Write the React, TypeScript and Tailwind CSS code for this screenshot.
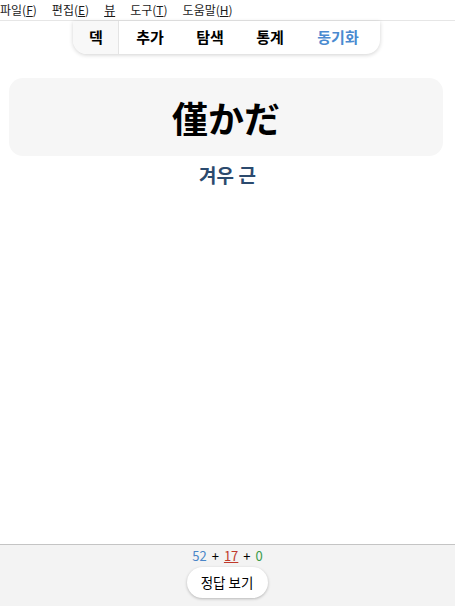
import React from "react";

const kr = { fontFamily: '"Noto Sans CJK KR", "Noto Sans", sans-serif' };
const jp = { fontFamily: '"Noto Sans CJK JP", "Noto Sans CJK KR", sans-serif' };

function MenuItem({ label, mn }: { label: string; mn?: string }) {
  return (
    <span className="leading-none">
      {mn ? (
        <>
          {label}(<span className="underline">{mn}</span>)
        </>
      ) : (
        <span className="underline">{label}</span>
      )}
    </span>
  );
}

export default function App() {
  const tabs = ["추가", "탐색", "통계"];
  return (
    <div className="w-[455px] h-[606px] flex flex-col bg-white text-black overflow-hidden" style={kr}>
      <div className="h-[21px] flex items-center gap-[15px] text-[12px] text-[#1a1a1a] border-b border-[#e6e6e6]">
        <MenuItem label="파일" mn="F" />
        <MenuItem label="편집" mn="E" />
        <MenuItem label="뷰" />
        <MenuItem label="도구" mn="T" />
        <MenuItem label="도움말" mn="H" />
      </div>

      <div className="flex justify-center">
        <div className="ml-[-3px] flex h-[33px] items-stretch rounded-b-[14px] bg-white shadow-[0_1px_4px_rgba(0,0,0,0.18)] overflow-hidden text-[15px] font-bold">
          <div className="w-[46px] pl-[2px] flex items-center justify-center bg-[#f8f8f8] border-r border-[#e4e4e4]">덱</div>
          {tabs.map(t => (
            <div key={t} className="w-[60px] pl-[3px] flex items-center justify-center">{t}</div>
          ))}
          <div className="w-[81px] pr-[2px] flex items-center justify-center text-[#4a8ad0]">동기화</div>
        </div>
      </div>

      <div className="flex-1 flex flex-col pl-[9px] pr-[12px] pt-[24px]">
        <div className="h-[78px] rounded-[14px] bg-[#f6f6f6] flex items-center justify-center">
          <span className="text-[36px] font-bold leading-none" style={jp}>僅かだ</span>
        </div>
        <div className="mt-[5px] pl-[3px] text-center text-[19px] font-bold text-[#2b4a6e]">겨우 근</div>
      </div>

      <div className="h-[62px] border-t border-[#c4c4c4] bg-[#f3f3f3] flex flex-col items-center">
        <div className="mt-[3px] text-[13px] leading-[16px] flex">
          <span className="text-[#4a86c8]">52</span>
          <span className="mx-[5px]">+</span>
          <span className="text-[#c0392b] underline">17</span>
          <span className="mx-[5px]">+</span>
          <span className="text-[#3a9a4a]">0</span>
        </div>
        <button className="mt-[3px] w-[81px] h-[31px] rounded-full bg-white text-[13.5px] shadow-[0_1px_3px_rgba(0,0,0,0.25)] ml-[-1px]">
          정답 보기
        </button>
      </div>
    </div>
  );
}
